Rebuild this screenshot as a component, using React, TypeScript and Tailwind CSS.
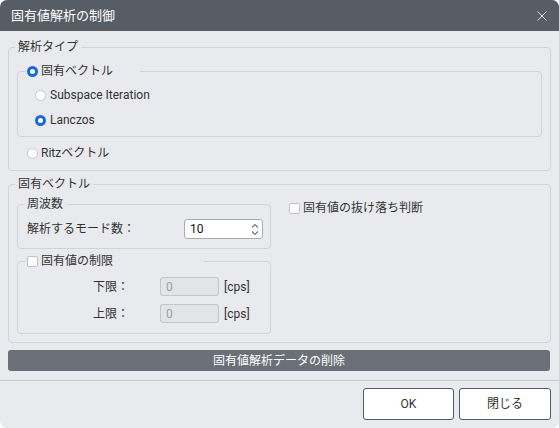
import React from "react";

function Radio({ checked }: { checked?: boolean }) {
  return checked ? (
    <span className="inline-block w-[11px] h-[11px] rounded-full border-[3px] border-[#1768e0] bg-white shrink-0" />
  ) : (
    <span className="inline-block w-[11px] h-[11px] rounded-full border border-[#c4c6cb] bg-white shrink-0" />
  );
}

function Checkbox() {
  return <span className="inline-block w-[11px] h-[11px] rounded-[2px] border border-[#bfc1c6] bg-white shrink-0" />;
}

export default function App() {
  return (
    <div className="w-[559px] h-[428px] bg-white font-['Roboto','Noto_Sans_CJK_JP',sans-serif] text-[12px] text-[#333]">
      <div className="w-full h-full flex flex-col rounded-[7px] overflow-hidden bg-[#e9eaee]">
        {/* Title bar */}
        <div className="h-[31px] bg-[#575d65] flex items-center justify-between pl-[11px] pr-[12px] shrink-0">
          <span className="text-white text-[13px] leading-4">固有値解析の制御</span>
          <svg width="10" height="10" viewBox="0 0 10 10" className="text-[#d8dadd]">
            <path d="M0.5 0.5 L9.5 9.5 M9.5 0.5 L0.5 9.5" stroke="currentColor" strokeWidth="1" fill="none" />
          </svg>
        </div>

        <div className="flex flex-col px-2 pt-2">
          {/* 解析タイプ */}
          <fieldset className="border border-[#d2d3d7] rounded-[4px] pb-[9px] min-w-0">
            <legend className="ml-[6px] px-[3px] leading-4">解析タイプ</legend>
            <fieldset className="mx-[8px] mt-[8px] border border-[#d2d3d7] rounded-[4px] pb-2 min-w-0">
              <legend className="ml-[8px] w-[114px] pl-[1px] leading-4">
                <span className="flex items-center gap-[3px]">
                  <Radio checked />
                  <span>固有ベクトル</span>
                </span>
              </legend>
              <div className="flex flex-col gap-[9px] pt-2 pl-[17px]">
                <label className="flex items-center gap-[4px] leading-4">
                  <Radio />
                  <span>Subspace Iteration</span>
                </label>
                <label className="flex items-center gap-[4px] leading-4">
                  <Radio checked />
                  <span>Lanczos</span>
                </label>
              </div>
            </fieldset>
            <label className="flex items-center gap-[3px] leading-4 mt-2 ml-[18px]">
              <Radio />
              <span>Ritzベクトル</span>
            </label>
          </fieldset>

          {/* 固有ベクトル */}
          <fieldset className="mt-[5px] border border-[#d2d3d7] rounded-[4px] pb-[8px] min-w-0">
            <legend className="ml-[6px] px-[3px] leading-4">固有ベクトル</legend>
            <div className="flex">
              <div className="ml-[8px] w-[254px] flex flex-col">
                <fieldset className="mt-[4px] border border-[#d2d3d7] rounded-[4px] pb-[9px] min-w-0">
                  <legend className="ml-[6px] px-[3px] leading-4">周波数</legend>
                  <div className="flex items-center justify-between pt-[7px] pl-[9px] pr-[7px]">
                    <span>解析するモード数：</span>
                    <div className="w-[79px] h-[20px] bg-white border border-[#a9abb0] rounded-[3px] flex items-center justify-between pl-[5px] pr-[3px]">
                      <span className="text-[#111]">10</span>
                      <svg width="8" height="13" viewBox="0 0 8 13" className="text-[#777]">
                        <path d="M1 4.5 L4 1.5 L7 4.5 M1 8.5 L4 11.5 L7 8.5" stroke="currentColor" strokeWidth="1.2" fill="none" />
                      </svg>
                    </div>
                  </div>
                </fieldset>
                <fieldset className="mt-[4px] border border-[#d2d3d7] rounded-[4px] pb-[10px] min-w-0">
                  <legend className="ml-[8px] w-[178px] pl-[1px] leading-4">
                    <span className="flex items-center gap-[3px]">
                      <Checkbox />
                      <span>固有値の制限</span>
                    </span>
                  </legend>
                  <div className="flex flex-col gap-[8px] pt-[8px]">
                    {["下限：", "上限："].map((l) => (
                      <div key={l} className="flex items-center pl-[75px]">
                        <span className="w-[67px]">{l}</span>
                        <div className="w-[59px] h-[19px] bg-[#e3e4e8] border border-[#c3c5ca] rounded-[3px] flex items-center pl-[5px] text-[#9a9ca0]">
                          0
                        </div>
                        <span className="ml-[5px]">[cps]</span>
                      </div>
                    ))}
                  </div>
                </fieldset>
              </div>
              <label className="ml-[18px] mt-[8px] flex items-start gap-[3px] leading-4 h-4">
                <span className="mt-[3px] flex"><Checkbox /></span>
                <span>固有値の抜け落ち判断</span>
              </label>
            </div>
          </fieldset>

          <button className="mt-[7px] h-[21px] mr-px rounded-[3px] bg-[#6b7078] text-white leading-4">
            固有値解析データの削除
          </button>
        </div>

        <div className="mt-[9px] h-px bg-[#c8cacd]" />

        <div className="flex justify-end gap-[5px] pr-2 mt-[7px]">
          <button className="w-[91px] h-[32px] bg-white border border-[#555a60] rounded-[3px]">OK</button>
          <button className="w-[92px] h-[32px] bg-white border border-[#555a60] rounded-[3px]">閉じる</button>
        </div>
      </div>
    </div>
  );
}
